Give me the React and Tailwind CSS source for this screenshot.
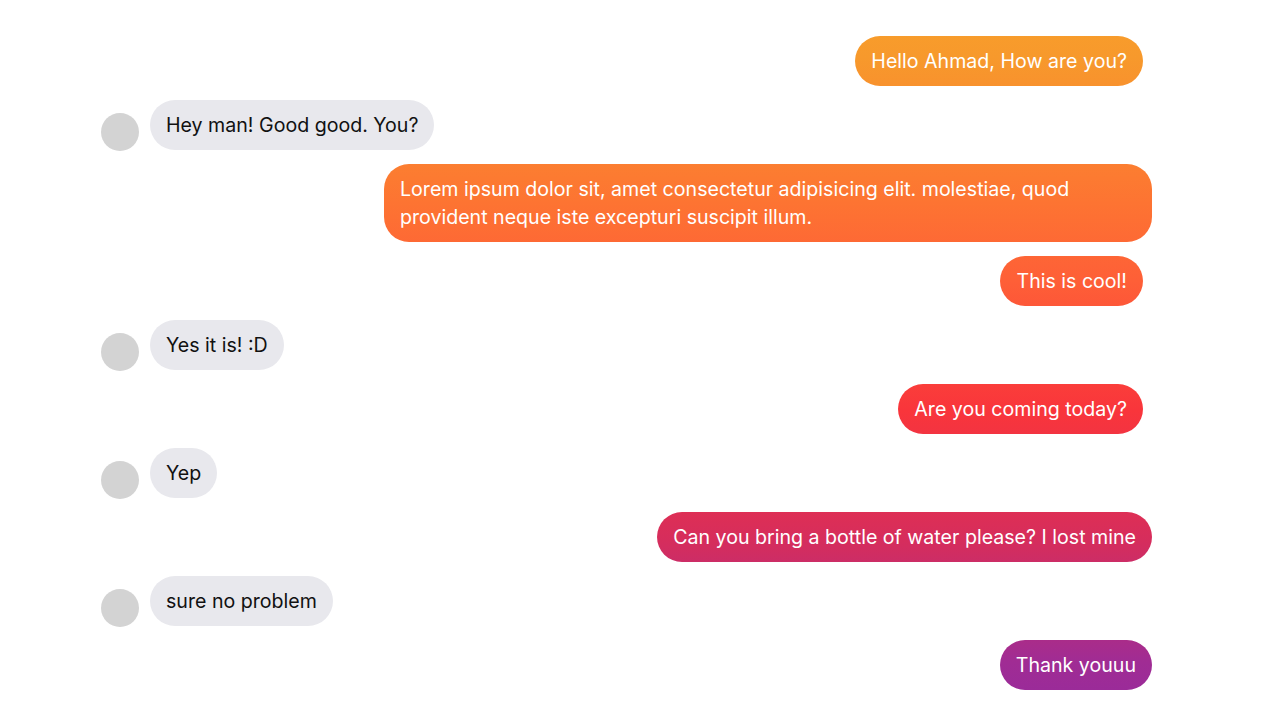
import React from "react";

const messages = [
  { from: "me", text: "Hello Ahmad, How are you?", edge: "mr-[9px]" },
  { from: "them", text: "Hey man! Good good. You?" },
  {
    from: "me",
    text: "Lorem ipsum dolor sit, amet consectetur adipisicing elit. molestiae, quod provident neque iste excepturi suscipit illum.",
    edge: "",
  },
  { from: "me", text: "This is cool!", edge: "mr-[9px]" },
  { from: "them", text: "Yes it is! :D" },
  { from: "me", text: "Are you coming today?", edge: "mr-[9px]" },
  { from: "them", text: "Yep" },
  { from: "me", text: "Can you bring a bottle of water please? I lost mine", edge: "" },
  { from: "them", text: "sure no problem" },
  { from: "me", text: "Thank youuu", edge: "" },
];

const App = () => {
  return (
    <div className="min-h-[720px] bg-white font-['Inter','Liberation_Sans',Arial,sans-serif] text-[19.6px] leading-[28px]">
      <div className="ml-[101px] w-[1051px] pt-[36px] flex flex-col gap-[14px]">
        {messages.map((msg, index) =>
          msg.from === "me" ? (
            <div key={index} className="flex justify-end">
              <div
                className={`max-w-[768px] px-[16px] py-[11px] rounded-[25px] text-white bg-fixed bg-[linear-gradient(to_bottom,#f9a02a_0%,#f7992c_8%,#fd7432_28%,#fe5f37_39%,#f9353b_57%,#d62d5c_75%,#a02c94_92%,#952a9e_100%)] ${msg.edge}`}
              >
                {msg.text}
              </div>
            </div>
          ) : (
            <div key={index} className="flex items-end gap-[11px]">
              <div className="w-[38px] h-[38px] rounded-full bg-[#d3d3d3] shrink-0 -mb-[1px]" />
              <div className="px-[16px] py-[11px] rounded-[25px] bg-[#e8e8ed] text-[#111]">
                {msg.text}
              </div>
            </div>
          )
        )}
      </div>
    </div>
  );
};

export default App;
